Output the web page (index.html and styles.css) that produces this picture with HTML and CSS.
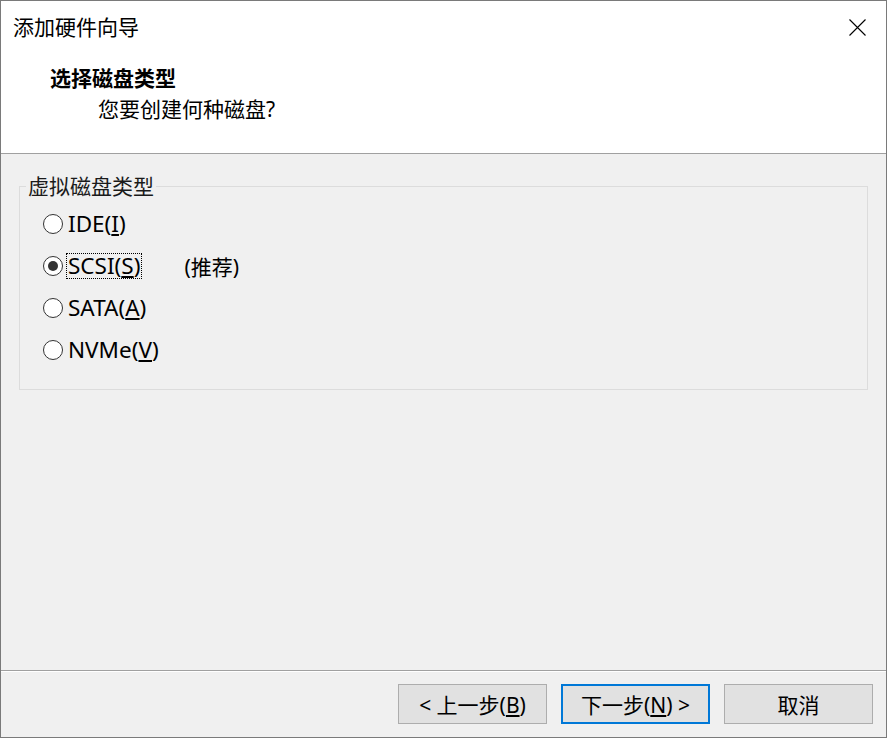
FILE: index.html
```html
<!DOCTYPE html>
<html lang="zh-CN">
<head>
  <meta charset="UTF-8">
  <title>添加硬件向导</title>
  <link rel="stylesheet" href="styles.css">
</head>
<body>

  <!-- Dialog window -->
  <div class="window">

    <!-- Title bar -->
    <div class="titlebar">
      <span class="title">添加硬件向导</span>
      <svg class="close" width="17" height="17" viewBox="0 0 17 17">
        <path d="M0.5 0.5 L16.5 16.5 M16.5 0.5 L0.5 16.5" stroke="#000" stroke-width="1.1" fill="none"/>
      </svg>
    </div>

    <!-- Wizard header -->
    <div class="wizard-header">
      <div class="step-title">选择磁盘类型</div>
      <div class="step-desc">您要创建何种磁盘?</div>
    </div>

    <!-- Content -->
    <div class="content">
      <fieldset class="group">
        <legend>虚拟磁盘类型</legend>

        <div class="option">
          <span class="radio"></span>
          <span class="label">IDE(<u>I</u>)</span>
        </div>
        <div class="option">
          <span class="radio checked"></span>
          <span class="label focused">SCSI(<u>S</u>)</span>
          <span class="note">(推荐)</span>
        </div>
        <div class="option">
          <span class="radio"></span>
          <span class="label">SATA(<u>A</u>)</span>
        </div>
        <div class="option">
          <span class="radio"></span>
          <span class="label">NVMe(<u>V</u>)</span>
        </div>
      </fieldset>
    </div>

    <!-- Buttons -->
    <div class="footer">
      <button class="btn">&lt; 上一步(<u>B</u>)</button>
      <button class="btn default">下一步(<u>N</u>) &gt;</button>
      <button class="btn">取消</button>
    </div>

  </div>

</body>
</html>
```

FILE: styles.css
```css
body {
  margin: 0;
  padding: 0;
  font-family: "Noto Sans", "Noto Sans CJK SC", sans-serif;
  font-size: 21px;
  color: #000;
  overflow: hidden;
}

/* Window frame */
.window {
  display: flex;
  flex-direction: column;
  width: 887px;
  height: 738px;
  box-sizing: border-box;
  border: 1px solid #7a7a7a;
  background-color: #f0f0f0;
}

/* Title bar */
.titlebar {
  display: flex;
  align-items: center;
  justify-content: space-between;
  height: 52px;
  padding: 0 20px 0 12px;
  background-color: #fff;
}

.title {
  line-height: 28px;
}

.close {
  display: block;
}

/* Wizard header */
.wizard-header {
  background-color: #fff;
  padding: 10px 0 29px 0;
  border-bottom: 1px solid #a0a0a0;
}

.step-title {
  font-weight: bold;
  line-height: 30px;
  padding-left: 49px;
}

.step-desc {
  line-height: 30px;
  margin-top: 1px;
  padding-left: 97px;
}

/* Content area */
.content {
  flex: 1;
}

.group {
  margin: 20px 18px 0 18px;
  padding: 5px 0 18px 0;
  border: 1px solid #dcdcdc;
}

.group legend {
  margin-left: 6px;
  padding: 0 2px;
  line-height: 24px;
  color: #1a1a1a;
}

.option {
  display: flex;
  align-items: center;
  height: 42px;
  padding-left: 23px;
}

.radio {
  position: relative;
  width: 20px;
  height: 20px;
  box-sizing: border-box;
  border: 1px solid #333;
  border-radius: 50%;
  background-color: #fff;
}

.radio.checked::after {
  content: "";
  position: absolute;
  top: 4px;
  left: 4px;
  width: 10px;
  height: 10px;
  border-radius: 50%;
  background-color: #333;
}

.label {
  margin-left: 3px;
  padding: 0 1px;
  font-size: 22.5px;
  line-height: 24px;
  border: 1px dotted transparent;
}

.label.focused {
  border-color: #000;
}

.note {
  margin-left: 42px;
}

/* Footer with buttons */
.footer {
  display: flex;
  justify-content: flex-end;
  gap: 14px;
  padding: 13px 13px 13px 0;
  border-top: 1px solid #a0a0a0;
  box-shadow: inset 0 1px 0 #fff;
}

.btn {
  width: 149px;
  height: 40px;
  box-sizing: border-box;
  padding: 0;
  font-family: inherit;
  font-size: 21px;
  color: #000;
  background-color: #e1e1e1;
  border: 1px solid #adadad;
}

.btn.default {
  border: 2px solid #0078d7;
}
```
